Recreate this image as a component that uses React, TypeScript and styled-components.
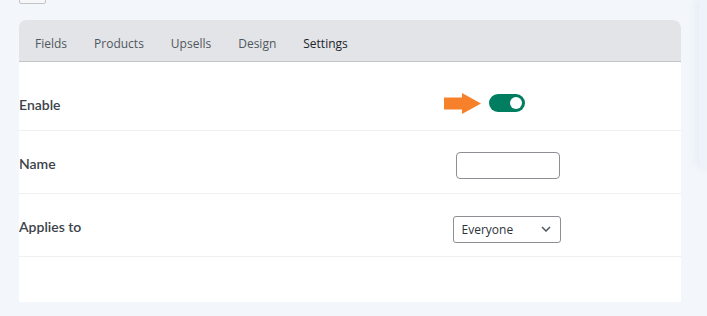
import React, { useState } from 'react'
import styled, { createGlobalStyle } from 'styled-components'

const GlobalStyle = createGlobalStyle`
  body {
    margin: 0;
    background: #f3f7fb;
    font-family: "Open Sans", "Noto Sans", sans-serif;
  }
`

const Page = styled.div`
  display: flex;
  align-items: flex-start;
  height: 316px;
  overflow: hidden;
`

const Main = styled.div`
  margin-left: 19px;
  width: 662px;
  flex-shrink: 0;
  display: flex;
  flex-direction: column;
`

const TopButton = styled.div`
  width: 25px;
  height: 20px;
  margin-top: -18px;
  margin-bottom: -4px;
  border: 1px solid #c3c4c7;
  border-radius: 2px;
  background: #f6f7f7;
`

const Card = styled.div`
  margin-top: 20px;
  background: #fff;
  border-radius: 7px 8px 0 0;
  overflow: hidden;
`

const TabBar = styled.div`
  display: flex;
  align-items: center;
  height: 41px;
  padding-left: 2.5px;
  background: #e2e4e7;
  border-bottom: 1px solid #c3c4c7;
`

interface TabProps {
  active: boolean
}
const Tab = styled.div<TabProps>`
  padding: 0 13.5px;
  font-size: 12px;
  line-height: 18px;
  margin-top: 7px;
  color: ${({ active }) => (active ? '#1d2327' : '#50575e')};
  cursor: pointer;
`

const Table = styled.div`
  padding-top: 14px;
  padding-bottom: 45px;
`

interface RowProps {
  height: number
}
const Row = styled.div<RowProps>`
  display: grid;
  grid-template-columns: 314px 1fr;
  align-items: center;
  height: ${({ height }) => height}px;
  border-bottom: 1px solid #f0f0f1;
`

const Label = styled.div`
  font-family: Lato, "Open Sans", sans-serif;
  font-weight: 600;
  font-size: 14px;
  color: #3c434a;
  padding-top: 2px;
`

interface ControlProps {
  offset?: number
}
const Control = styled.div<ControlProps>`
  display: flex;
  justify-content: center;
  padding-right: 1px;
  padding-top: ${({ offset }) => offset || 0}px;
`

const ToggleWrap = styled.div`
  position: relative;
`

const Arrow = styled.svg`
  position: absolute;
  right: 44px;
  top: -1px;
`

interface ToggleProps {
  on: boolean
}
const Toggle = styled.div<ToggleProps>`
  position: relative;
  width: 36px;
  height: 18px;
  border-radius: 9px;
  background: ${({ on }) => (on ? '#017e5f' : '#8c8f94')};
  cursor: pointer;

  &::after {
    content: '';
    position: absolute;
    top: 3px;
    left: ${({ on }) => (on ? '21px' : '3px')};
    width: 12px;
    height: 12px;
    border-radius: 50%;
    background: #fff;
  }
`

const TextInput = styled.input`
  box-sizing: border-box;
  width: 104px;
  height: 27px;
  margin-left: 3px;
  border: 1px solid #8c8f94;
  border-radius: 4px;
  background: #fff;
  outline: none;
  font: inherit;
`

const SelectBox = styled.div`
  box-sizing: border-box;
  display: flex;
  align-items: center;
  justify-content: space-between;
  width: 108px;
  height: 27px;
  padding: 0 9px 0 8px;
  border: 1px solid #8c8f94;
  border-radius: 3px;
  background: #fff;
  font-size: 12px;
  color: #2c3338;
`

const Sidebar = styled.div`
  margin-left: 18px;
  width: 60px;
  height: 167px;
  flex-shrink: 0;
  background: #eef2f9;
  border-radius: 0 0 0 6px;
  box-shadow: -3px 0 8px rgba(140, 160, 190, 0.12);
`

export default function App() {
  const [enabled, setEnabled] = useState(true)
  const tabs = ['Fields', 'Products', 'Upsells', 'Design', 'Settings']

  return (
    <>
      <GlobalStyle />
      <Page>
        <Main>
          <TopButton />
          <Card>
            <TabBar>
              {tabs.map(t => (
                <Tab key={t} active={t === 'Settings'}>
                  {t}
                </Tab>
              ))}
            </TabBar>
            <Table>
              <Row height={54}>
                <Label>Enable</Label>
                <Control>
                  <ToggleWrap>
                    {/* annotation arrow pointing at the toggle */}
                    <Arrow width="37" height="21" viewBox="0 0 37 21">
                      <polygon points="0,4.5 18,4.5 18,0 37,10.5 18,21 18,16.5 0,16.5" fill="#f7812a" />
                    </Arrow>
                    <Toggle on={enabled} onClick={() => setEnabled(!enabled)} />
                  </ToggleWrap>
                </Control>
              </Row>
              <Row height={62}>
                <Label>Name</Label>
                <Control offset={7}>
                  <TextInput type="text" />
                </Control>
              </Row>
              <Row height={62}>
                <Label>Applies to</Label>
                <Control offset={8}>
                  <SelectBox>
                    <span>Everyone</span>
                    <svg width="10" height="6" viewBox="0 0 10 6">
                      <path d="M1 1 L5 5 L9 1" stroke="#50575e" strokeWidth="1.5" fill="none" />
                    </svg>
                  </SelectBox>
                </Control>
              </Row>
            </Table>
          </Card>
        </Main>
        <Sidebar />
      </Page>
    </>
  )
}
